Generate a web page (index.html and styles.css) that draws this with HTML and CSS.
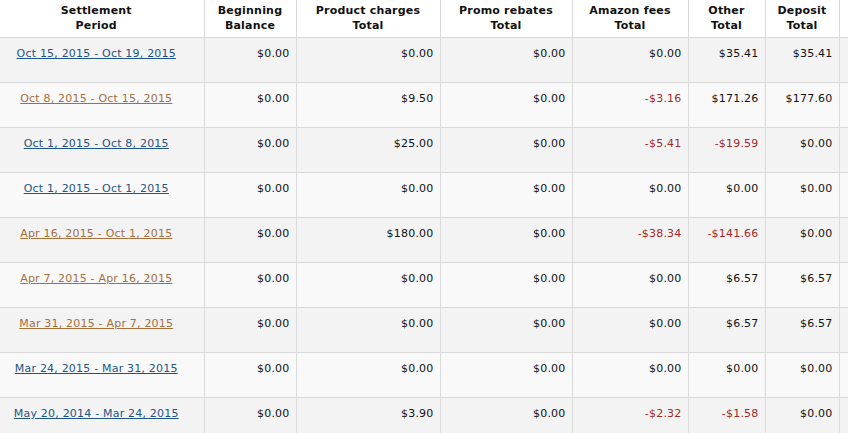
FILE: index.html
```html
<!DOCTYPE html>
<html>
<head>
<meta charset="utf-8">
<link rel="stylesheet" href="styles.css">
</head>
<body>
<table class="settle">
  <colgroup>
    <col class="c-period"><col class="c-begin"><col class="c-prod"><col class="c-promo"><col class="c-fees"><col class="c-other"><col class="c-dep"><col class="c-extra">
  </colgroup>
  <thead>
    <tr>
      <th class="first">Settlement<br>Period</th>
      <th>Beginning<br>Balance</th>
      <th>Product charges<br>Total</th>
      <th>Promo rebates<br>Total</th>
      <th>Amazon fees<br>Total</th>
      <th>Other<br>Total</th>
      <th>Deposit<br>Total</th>
      <th></th>
    </tr>
  </thead>
  <tbody>
    <tr class="odd">
      <td class="first"><a class="link" href="#">Oct 15, 2015 - Oct 19, 2015</a></td>
      <td>$0.00</td><td>$0.00</td><td>$0.00</td><td>$0.00</td><td>$35.41</td><td>$35.41</td><td></td>
    </tr>
    <tr class="even">
      <td class="first"><a class="link visited" href="#">Oct 8, 2015 - Oct 15, 2015</a></td>
      <td>$0.00</td><td>$9.50</td><td>$0.00</td><td class="neg">-$3.16</td><td>$171.26</td><td>$177.60</td><td></td>
    </tr>
    <tr class="odd">
      <td class="first"><a class="link" href="#">Oct 1, 2015 - Oct 8, 2015</a></td>
      <td>$0.00</td><td>$25.00</td><td>$0.00</td><td class="neg">-$5.41</td><td class="neg">-$19.59</td><td>$0.00</td><td></td>
    </tr>
    <tr class="even">
      <td class="first"><a class="link" href="#">Oct 1, 2015 - Oct 1, 2015</a></td>
      <td>$0.00</td><td>$0.00</td><td>$0.00</td><td>$0.00</td><td>$0.00</td><td>$0.00</td><td></td>
    </tr>
    <tr class="odd">
      <td class="first"><a class="link visited" href="#">Apr 16, 2015 - Oct 1, 2015</a></td>
      <td>$0.00</td><td>$180.00</td><td>$0.00</td><td class="neg">-$38.34</td><td class="neg">-$141.66</td><td>$0.00</td><td></td>
    </tr>
    <tr class="even">
      <td class="first"><a class="link visited" href="#">Apr 7, 2015 - Apr 16, 2015</a></td>
      <td>$0.00</td><td>$0.00</td><td>$0.00</td><td>$0.00</td><td>$6.57</td><td>$6.57</td><td></td>
    </tr>
    <tr class="odd">
      <td class="first"><a class="link visited" href="#">Mar 31, 2015 - Apr 7, 2015</a></td>
      <td>$0.00</td><td>$0.00</td><td>$0.00</td><td>$0.00</td><td>$6.57</td><td>$6.57</td><td></td>
    </tr>
    <tr class="even">
      <td class="first"><a class="link" href="#">Mar 24, 2015 - Mar 31, 2015</a></td>
      <td>$0.00</td><td>$0.00</td><td>$0.00</td><td>$0.00</td><td>$0.00</td><td>$0.00</td><td></td>
    </tr>
    <tr class="odd">
      <td class="first"><a class="link" href="#">May 20, 2014 - Mar 24, 2015</a></td>
      <td>$0.00</td><td>$3.90</td><td>$0.00</td><td class="neg">-$2.32</td><td class="neg">-$1.58</td><td>$0.00</td><td></td>
    </tr>
  </tbody>
</table>
</body>
</html>
```
FILE: styles.css
```css
html, body {
  margin: 0;
  padding: 0;
  background: #ffffff;
  overflow: hidden;
}
body {
  font-family: "DejaVu Sans", Verdana, sans-serif;
  font-size: 11px;
  letter-spacing: 0.2px;
  color: #111;
}
.settle {
  border-collapse: collapse;
  table-layout: fixed;
  width: 870px;
}
.c-period { width: 204px; }
.c-begin { width: 92px; }
.c-prod { width: 144px; }
.c-promo { width: 132px; }
.c-fees { width: 116px; }
.c-other { width: 77px; }
.c-dep { width: 74px; }
.c-extra { width: 31px; }

.settle th {
  font-weight: bold;
  text-align: center;
  line-height: 15px;
  padding: 3px 4px 4px;
  height: 30px;
  border-right: 1px solid #dadada;
  border-bottom: 1px solid #dadada;
  background: #fff;
  color: #111;
  vertical-align: top;
}
.settle td {
  text-align: right;
  line-height: 14px;
  padding: 9px 6px 0 4px;
  height: 35px;
  vertical-align: top;
  border-right: 1px solid #dadada;
  border-bottom: 1px solid #dadada;
  white-space: nowrap;
}
.settle .first {
  text-align: center;
  padding-left: 0;
  padding-right: 11px;
}
.odd td { background: #f3f3f3; }
.even td { background: #f9f9f9; }
.link {
  color: #1f5583;
  text-decoration: underline;
}
.link.visited {
  color: #a4703e;
}
.neg {
  color: #a02a2a;
}
```
